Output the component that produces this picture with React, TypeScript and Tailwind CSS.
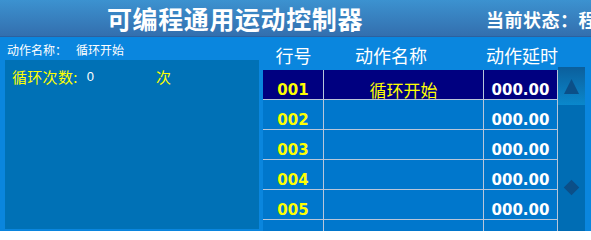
import React from 'react';

const CJK = "font-['Noto_Sans_CJK_SC',sans-serif]";
const NUM = "font-['DejaVu_Sans','Noto_Sans_CJK_SC',sans-serif]";

const ROWS = [
  { no: '001', name: '循环开始', delay: '000.00' },
  { no: '002', name: '', delay: '000.00' },
  { no: '003', name: '', delay: '000.00' },
  { no: '004', name: '', delay: '000.00' },
  { no: '005', name: '', delay: '000.00' },
  { no: '', name: '', delay: '' },
];

export default function App() {
  const selected = 0;

  return (
    <div className={`w-[591px] h-[231px] overflow-hidden bg-[#0a86de] flex flex-col ${CJK}`}>
      {/* title bar */}
      <div className="h-[37px] shrink-0 flex items-center bg-gradient-to-b from-[#3c92d0] to-[#336fae] border-b border-[#2c619f]">
        <div className="pl-[107px] text-white text-[25px] font-bold tracking-[0.6px] leading-none whitespace-nowrap">
          可编程通用运动控制器
        </div>
        <div className="ml-[123px] pt-[2px] text-white text-[18px] font-bold leading-none whitespace-nowrap tracking-[0.5px]">
          当前状态：程
        </div>
      </div>

      <div className="flex flex-1 min-h-0">
        {/* left: action detail */}
        <div className="w-[259px] shrink-0 pl-[5px] flex flex-col pb-[2px]">
          <div className="h-[23px] shrink-0 flex items-center pt-[3px] pl-[2px] text-white text-[12px] leading-none whitespace-nowrap">
            <span>动作名称：</span>
            <span className="ml-[9px]">循环开始</span>
          </div>
          <div className="flex-1 bg-[#0071b6] pl-[7px] pt-[9px]">
            <div className="flex items-center leading-none whitespace-nowrap">
              <span className="text-[#ffff00] text-[15px] tracking-[0.3px]">循环次数:</span>
              <span className="ml-[9px] text-white text-[13px] font-['Liberation_Sans',sans-serif]">0</span>
              <span className="ml-[62px] text-[#ffff00] text-[15px]">次</span>
            </div>
          </div>
        </div>

        {/* right: program table */}
        <div className="ml-[4px] w-[295px] shrink-0 flex flex-col">
          <div className="h-[33px] shrink-0 flex items-center pt-[2px] text-white text-[18px] leading-none whitespace-nowrap">
            <div className="w-[61px] text-center">行号</div>
            <div className="w-[160px] text-center pr-[26px]">动作名称</div>
            <div className="w-[74px] text-center pl-[2px]">动作延时</div>
          </div>
          {ROWS.map((r, i) => (
            <div
              key={i}
              className={`h-[30px] shrink-0 flex border-b border-[#b9c6da] ${i === selected ? 'bg-[#000080]' : 'bg-[#0077cc]'}`}
            >
              <div className={`w-[61px] border-r border-[#b9c6da] flex items-end justify-center pb-[1px] text-[#ffff00] text-[15px] font-bold leading-none ${NUM}`}>
                {r.no}
              </div>
              <div className={`w-[160px] border-r border-[#b9c6da] flex items-end justify-center pb-[1px] text-[#ffff00] text-[17px] leading-none ${CJK}`}>
                {r.name}
              </div>
              <div className={`w-[74px] border-r border-[#b9c6da] flex items-end justify-center pb-[1px] text-white text-[15px] font-bold leading-none ${NUM}`}>
                {r.delay}
              </div>
            </div>
          ))}
        </div>

        {/* scrollbar */}
        <div className="w-[27px] shrink-0 mt-[30px] flex flex-col bg-[#006db4]">
          <div className="h-[38px] shrink-0 flex items-center justify-center bg-gradient-to-b from-[#0b5f9c] to-[#0a88cc]">
            <svg width="15" height="15" viewBox="0 0 15 15">
              <path d="M7.5 0 L15 15 L0 15 Z" fill="#0b4f88" />
            </svg>
          </div>
          <div className="flex-1 flex items-start justify-center pt-[77px]">
            <div className="w-[11px] h-[11px] rotate-45 bg-[#0b4f88]" />
          </div>
        </div>
      </div>
    </div>
  );
}
